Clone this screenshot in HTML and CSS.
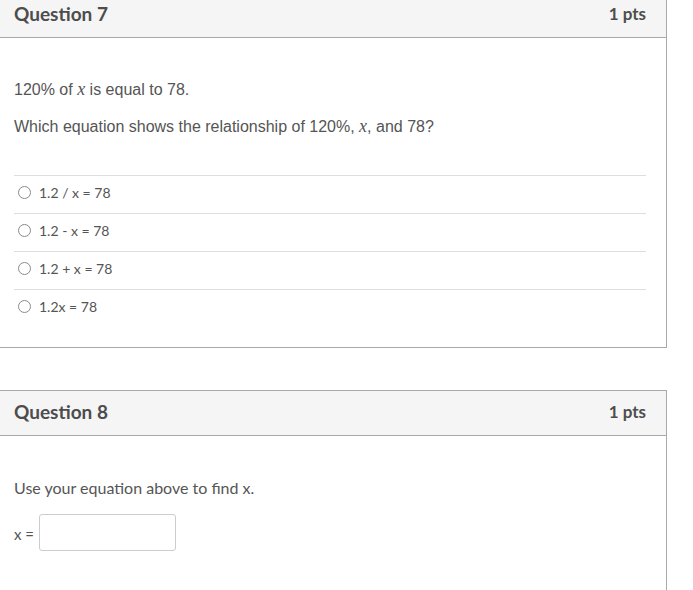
FILE: index.html
```html
<!DOCTYPE html>
<html>
<head>
<meta charset="utf-8">
<link rel="stylesheet" href="styles.css">
</head>
<body>
<div class="page">
  <div class="card">
    <div class="card-header">
      <span class="q-name">Question 7</span>
      <span class="q-pts">1 pts</span>
    </div>
    <div class="card-body">
      <p class="q-text arial">120% of <span class="math">x</span> is equal to 78.</p>
      <p class="q-text arial">Which equation shows the relationship of 120%, <span class="math">x</span>, and 78?</p>
      <div class="answers">
        <div class="answer"><span class="radio"></span><span class="ans-text">1.2 / x = 78</span></div>
        <div class="answer"><span class="radio"></span><span class="ans-text">1.2 - x = 78</span></div>
        <div class="answer"><span class="radio"></span><span class="ans-text">1.2 + x = 78</span></div>
        <div class="answer"><span class="radio"></span><span class="ans-text">1.2x = 78</span></div>
      </div>
    </div>
  </div>
  <div class="card card-2">
    <div class="card-header">
      <span class="q-name">Question 8</span>
      <span class="q-pts">1 pts</span>
    </div>
    <div class="card-body">
      <p class="q-text">Use your equation above to find x.</p>
      <div class="fill-row">
        <span class="fill-label">x =</span>
        <span class="fill-input"></span>
      </div>
    </div>
  </div>
</div>
</body>
</html>
```

FILE: styles.css
```css
html, body {
  margin: 0;
  padding: 0;
  background: #ffffff;
}
body {
  font-family: Lato, "Liberation Sans", sans-serif;
  color: #555555;
  overflow: hidden;
  height: 590px;
}
.page {
  margin-top: -8px;
  margin-left: -1px;
  width: 668px;
}
.card {
  border: 1px solid #a9a9a9;
  background: #ffffff;
}
.card-2 {
  margin-top: 42px;
  height: 230px;
}
.card-header {
  height: 45px;
  box-sizing: border-box;
  background: #f5f5f5;
  border-bottom: 1px solid #a9a9a9;
  display: flex;
  align-items: center;
  justify-content: space-between;
  padding: 0 20px 3px 14px;
}
.q-name {
  font-weight: 700;
  font-size: 19px;
  color: #4d4d4d;
}
.q-pts {
  font-weight: 700;
  font-size: 17px;
  color: #4d4d4d;
}
.card-body {
  padding: 26px 20px 20px 14px;
}
.q-text {
  margin: 15px 0;
  font-size: 16px;
  line-height: 22px;
  height: 22px;
  color: #555555;
}
.arial {
  font-family: "Liberation Sans", Arial, sans-serif;
}
.math {
  font-family: "Liberation Serif", serif;
  font-style: italic;
  font-size: 18px;
  line-height: 12px;
}
.answers {
  margin-top: 37px;
}
.answer {
  box-sizing: border-box;
  height: 38px;
  border-top: 1px solid #dedede;
  padding: 0 0 5px 4px;
  display: flex;
  align-items: center;
  gap: 8px;
}
.radio {
  box-sizing: border-box;
  width: 13px;
  height: 13px;
  border: 1px solid #8a8a8a;
  border-radius: 50%;
  background: #ffffff;
}
.ans-text {
  font-size: 14px;
  color: #555555;
}
.fill-row {
  display: flex;
  align-items: center;
  gap: 5px;
}
.fill-label {
  font-size: 15px;
  color: #555555;
  padding-top: 3px;
}
.fill-input {
  box-sizing: border-box;
  width: 137px;
  height: 37px;
  border: 1px solid #cccccc;
  border-radius: 3px;
  background: #ffffff;
}
```
